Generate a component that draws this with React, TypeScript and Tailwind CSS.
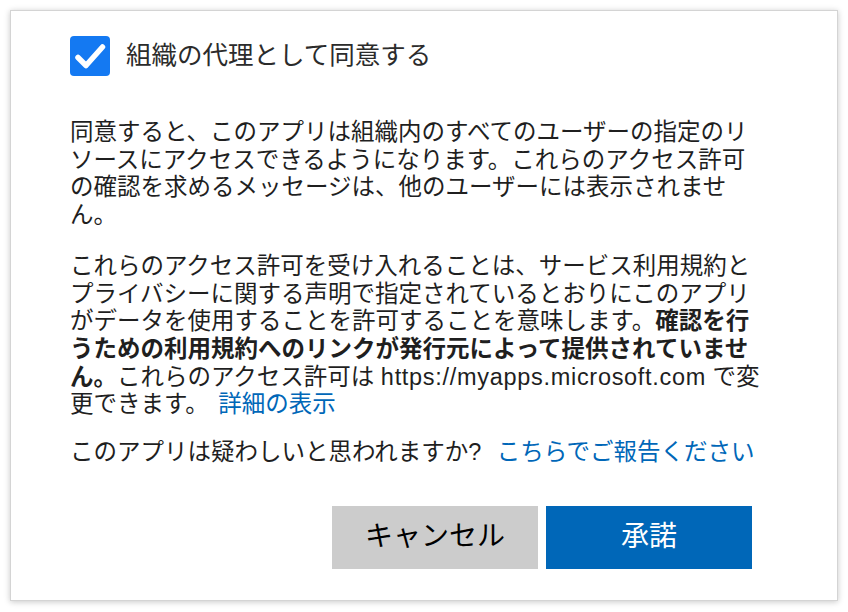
import React, { useState } from 'react';

const font = { fontFamily: '"Liberation Sans", "Noto Sans CJK JP", sans-serif' };

const App: React.FC = () => {
  const [checked, setChecked] = useState(true);

  return (
    <div className="w-[848px] h-[612px] bg-white p-[10px]" style={font}>
      <div className="w-[828px] bg-white border border-[#d4d4d4] shadow-[0_1px_6px_rgba(0,0,0,0.22)] pl-[59px] pr-[10px] pt-[25px] pb-[31px]">
        <label className="flex items-center gap-4 cursor-pointer">
          <button
            onClick={() => setChecked(!checked)}
            className={`w-10 h-10 rounded-[4px] flex items-center justify-center shrink-0 ${
              checked ? 'bg-[#1479f2]' : 'bg-white border-2 border-gray-400'
            }`}
          >
            {checked && (
              <svg width="40" height="40" viewBox="0 0 40 40" fill="none">
                <path d="M8 21.5 L16 29.5 L32.5 11" stroke="white" strokeWidth="5.5" strokeLinecap="round" strokeLinejoin="round" />
              </svg>
            )}
          </button>
          <span className="text-[25.5px] text-[#2b2b2b] leading-none">組織の代理として同意する</span>
        </label>

        <div className="w-[690px] text-[23.5px] leading-[27.7px] text-[#1f1f1f] mt-[43px]">
          <p>
            同意すると、このアプリは組織内のすべてのユーザーの指定のリソースにアクセスできるようになります。これらのアクセス許可の確認を求めるメッセージは、他のユーザーには表示されません。
          </p>
          <p className="mt-[23px]">
            これらのアクセス許可を受け入れることは、サービス利用規約とプライバシーに関する声明で指定されているとおりにこのアプリがデータを使用することを許可することを意味します。
            <b className="font-bold">確認を行うための利用規約へのリンクが発行元によって提供されていません。</b>
            これらのアクセス許可は <span className="tracking-[0.7px]">https://myapps.microsoft.com</span> で変更できます。{' '}
            <a href="#" className="text-[#0067b8] ml-[3px]">詳細の表示</a>
          </p>
          <p className="mt-[20px]">
            このアプリは疑わしいと思われますか<span className="tracking-[0.7px]">?</span>{' '}
            <a href="#" className="text-[#0067b8] ml-[8px]">こちらでご報告ください</a>
          </p>
        </div>

        <div className="w-[682px] flex justify-end gap-2 mt-[39px]">
          <button className="w-[206px] h-[63px] bg-[#cccccc] text-black text-[28px]">キャンセル</button>
          <button className="w-[206px] h-[63px] bg-[#0067b8] text-white text-[28px]">承諾</button>
        </div>
      </div>
    </div>
  );
};

export default App;
